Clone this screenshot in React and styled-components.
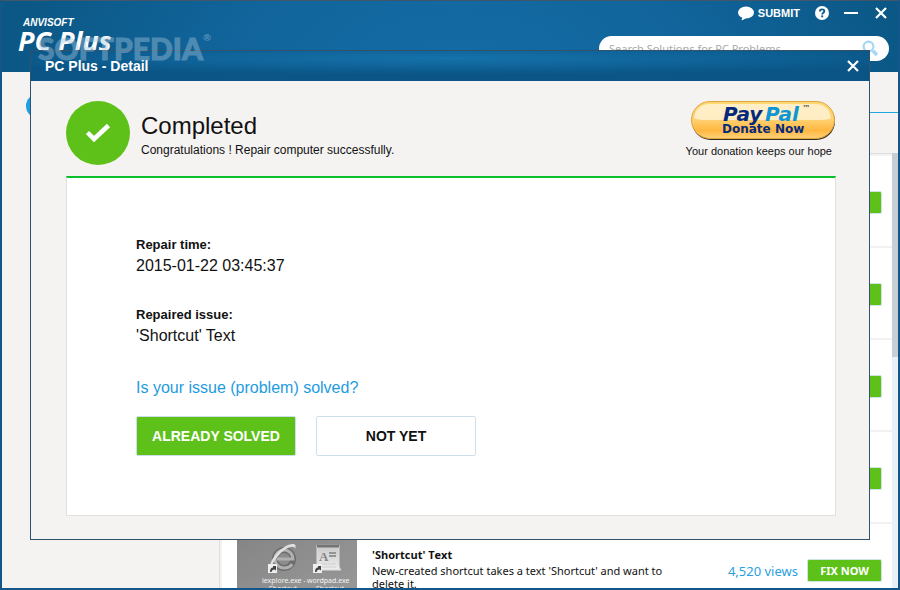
import React from "react";
import styled, { createGlobalStyle } from "styled-components";

const issues = [
  { id: 1 },
  { id: 2 },
  { id: 3 },
  { id: 4 },
  {
    id: 5,
    title: "'Shortcut' Text",
    description: "New-created shortcut takes a text 'Shortcut' and want to delete it.",
    views: "4,520 views",
  },
];

const CloseIcon = () => (
  <svg width="12" height="12" viewBox="0 0 12 12" aria-hidden="true">
    <path d="M1 1l10 10M11 1L1 11" stroke="#fff" strokeWidth="2.200" fill="none" />
  </svg>
);

const BubbleIcon = () => (
  <svg width="16" height="15" viewBox="0 0 16 15" aria-hidden="true">
    <ellipse cx="8" cy="6.500" rx="8" ry="6" fill="#fff" />
    <path d="M3.500 9.500c1 1.500 1 3-.2 4.800 2-.2 4-1.200 5-3z" fill="#fff" />
  </svg>
);

const HelpIcon = () => (
  <svg width="14" height="14" viewBox="0 0 14 14" aria-hidden="true">
    <circle cx="7" cy="7" r="7" fill="#fff" />
    <path
      d="M4.900 5.500c0-1.500 1-2.100 2.200-2.100s2.200.7 2.200 1.900c0 1.600-2.100 1.500-2.100 3.200"
      stroke="#0f5c90"
      strokeWidth="1.900"
      fill="none"
    />
    <rect x="6.200" y="9.400" width="2" height="1.900" fill="#0f5c90" />
  </svg>
);

const SearchIcon = () => (
  <svg width="17" height="17" viewBox="0 0 17 17" aria-hidden="true">
    <circle cx="6.500" cy="6.500" r="4.900" stroke="#a5d8f5" strokeWidth="2.200" fill="none" />
    <path d="M10 10l2 2" stroke="#a5d8f5" strokeWidth="2" />
    <path d="M11.300 11.300l3.700 3.700" stroke="#a5d8f5" strokeWidth="3.600" />
  </svg>
);

const PayPalBadge = () => (
  <svg width="145" height="40" viewBox="0 0 145 40" aria-hidden="true">
    <defs>
      <linearGradient id="gold" x1="0" y1="0" x2="0" y2="1">
        <stop offset="0" stopColor="#ffd873" />
        <stop offset="0.500" stopColor="#ffcf70" />
        <stop offset="0.780" stopColor="#ffb740" />
        <stop offset="1" stopColor="#ffd27a" />
      </linearGradient>
      <linearGradient id="shine" x1="0" y1="0" x2="0" y2="1">
        <stop offset="0" stopColor="#fff" stopOpacity="0.600" />
        <stop offset="1" stopColor="#fff6dc" stopOpacity="0.750" />
      </linearGradient>
    </defs>
    <rect x="1" y="2" width="143" height="37" rx="18.500" fill="#38301f" />
    <rect x="0.500" y="0.500" width="143" height="37" rx="18.500" fill="url(#gold)" stroke="#dfa640" />
    <path d="M3 17.500C4 8 10 3 19 3h105c9 0 15 5 16 14.500-4 1.500-8 1.500-14 1.500H17c-6 0-10 0-14-1.500z" fill="url(#shine)" />
    <g fontFamily="DejaVu Sans" fontWeight="bold">
      <text x="32" y="20" fontSize="20" fontStyle="italic" fill="#042a7b">Pay</text>
      <text x="74" y="20" fontSize="20" fontStyle="italic" fill="#0f95d4">Pal</text>
      <text x="111" y="10" fontSize="8" fill="#555">™</text>
      <text x="31" y="32" fontSize="12" fill="#042a7b">Donate Now</text>
    </g>
  </svg>
);

const ShortcutArrow = ({ x, y }) => (
  <g transform={`translate(${x} ${y})`}>
    <rect width="9" height="9" fill="#eee" />
    <path d="M2 8c0-3 1-4.500 3-4.500V2h3v4.500L6.500 5.500C4.500 5.500 4 6.500 3.500 8z" fill="#444" />
  </g>
);

const Thumbnail = () => (
  <svg width="120" height="68" viewBox="0 0 120 68" aria-hidden="true">
    <defs>
      <linearGradient id="desk" x1="0" y1="0" x2="1" y2="1">
        <stop offset="0" stopColor="#858585" />
        <stop offset="1" stopColor="#9a9a9a" />
      </linearGradient>
      <linearGradient id="paper" x1="0" y1="0" x2="0" y2="1">
        <stop offset="0" stopColor="#c8c8c8" />
        <stop offset="1" stopColor="#eee" />
      </linearGradient>
    </defs>
    <rect width="120" height="68" fill="url(#desk)" />
    <circle cx="47" cy="22" r="9" fill="none" stroke="#6c6c6c" strokeWidth="6" />
    <path d="M40 22h16c0-5-4-9-9-9s-9 4-9 9 4 9 9 9c4 0 7-2 8-4" fill="none" stroke="#b0b0b0" strokeWidth="3" />
    <path d="M34 31c-3-5 6-18 17-23 6-2 9-1 7 4 0-3-4-3-9 0-8 5-13 13-15 19z" fill="#e0e0e0" />
    <path d="M80 8h22v20c0 2 1 4 2 5H83c-2-1-3-3-3-5z" fill="url(#paper)" stroke="#ddd" />
    <path d="M80 9h22" stroke="#747474" strokeWidth="3" />
    <text x="82" y="24" fontFamily="Liberation Serif" fontSize="13" fontWeight="bold" fill="#858585">A</text>
    <path d="M92 16h7M92 19h7" stroke="#949494" strokeWidth="2" />
    <path d="M84 27h15M84 30h15" stroke="#d0d0d0" />
    <ShortcutArrow x={31} y={27} />
    <ShortcutArrow x={76} y={27} />
    <g fontFamily="Noto Sans" fontSize="7" fill="#f4f4f4">
      <text x="25" y="46">iexplore.exe -</text>
      <text x="70" y="46">wordpad.exe</text>
      <text x="32" y="54">Shortcut</text>
      <text x="79" y="54">Shortcut</text>
    </g>
  </svg>
);

const App = () => {
  return (
    <Janela>
      <GlobalStyle />
      <Topo>
        <Marca>
          <MarcaEmpresa>ANVISOFT</MarcaEmpresa>
          <MarcaProduto>PC Plus</MarcaProduto>
        </Marca>
        <TopoDireita>
          <Acoes>
            <BotaoTopo>
              <BubbleIcon />
              SUBMIT
            </BotaoTopo>
            <BotaoTopo aria-label="Help">
              <HelpIcon />
            </BotaoTopo>
            <BotaoTopo aria-label="Minimize">
              <Traco />
            </BotaoTopo>
            <BotaoTopo aria-label="Close">
              <CloseIcon />
            </BotaoTopo>
          </Acoes>
          <Busca>
            <BuscaInput
              type="text"
              aria-label="Search"
              placeholder="Search Solutions for PC Problems"
            />
            <BotaoBusca aria-label="Search">
              <SearchIcon />
            </BotaoBusca>
          </Busca>
        </TopoDireita>
      </Topo>

      <Etapas>
        <EtapaPonto />
        <EtapaLinha />
      </Etapas>

      <Corpo>
        <Lateral />
        <Lista>
          {issues.map((issue) => (
            <Linha key={issue.id}>
              {issue.title && (
                <>
                  <Thumbnail />
                  <LinhaTexto>
                    <LinhaTitulo>{issue.title}</LinhaTitulo>
                    <LinhaDescricao>{issue.description}</LinhaDescricao>
                  </LinhaTexto>
                  <Visitas>{issue.views}</Visitas>
                </>
              )}
              <BotaoCorrigir aria-label="Fix now">{issue.title && "FIX NOW"}</BotaoCorrigir>
            </Linha>
          ))}
        </Lista>
        <Rolagem>
          <RolagemBarra />
        </Rolagem>
      </Corpo>

      <Dialogo role="dialog" aria-labelledby="dialog-title">
        <DialogoTopo>
          <DialogoTitulo id="dialog-title">PC Plus - Detail</DialogoTitulo>
          <BotaoTopo aria-label="Close dialog">
            <CloseIcon />
          </BotaoTopo>
        </DialogoTopo>
        <DialogoCorpo>
          <Resumo>
            <Selo>
              <svg width="26" height="22" viewBox="0 0 26 22" aria-hidden="true">
                <path d="M2.500 10.500l6.500 6.500L23.500 3.500" stroke="#fff" strokeWidth="4.500" fill="none" />
              </svg>
            </Selo>
            <ResumoTexto>
              <ResumoTitulo>Completed</ResumoTitulo>
              <ResumoDetalhe>Congratulations ! Repair computer successfully.</ResumoDetalhe>
            </ResumoTexto>
            <Doacao>
              <BotaoDoacao aria-label="PayPal Donate Now">
                <PayPalBadge />
              </BotaoDoacao>
              <DoacaoTexto>Your donation keeps our hope</DoacaoTexto>
            </Doacao>
          </Resumo>
          <Painel>
            <Dados>
              <Rotulo>Repair time:</Rotulo>
              <Valor>2015-01-22 03:45:37</Valor>
              <Rotulo>Repaired issue:</Rotulo>
              <Valor>'Shortcut' Text</Valor>
            </Dados>
            <Pergunta>Is your issue (problem) solved?</Pergunta>
            <Respostas>
              <BotaoResposta $primary>ALREADY SOLVED</BotaoResposta>
              <BotaoResposta>NOT YET</BotaoResposta>
            </Respostas>
          </Painel>
        </DialogoCorpo>
      </Dialogo>

      <MarcaDagua>
        SOFTPEDIA<Registrada>®</Registrada>
      </MarcaDagua>
    </Janela>
  );
};

const GlobalStyle = createGlobalStyle`
  * {
    box-sizing: border-box;
  }

  body {
    margin: 0;
    font-family: "Liberation Sans", Arial, sans-serif;
    color: #111;
  }

  button {
    font-family: inherit;
    cursor: pointer;
  }
`;

const Janela = styled.div`
  position: relative;
  display: flex;
  flex-direction: column;
  height: 100vh;
  overflow: hidden;
  border: 2px solid #14558a;
  border-top: 1px solid #42566a;
  background: #f5f3f2;
`;

const Topo = styled.header`
  display: flex;
  justify-content: space-between;
  flex: none;
  height: 71px;
  padding: 0 9px 0 16px;
  background: radial-gradient(ellipse 55% 300% at 51% 80%, #146ca5 0%, #11659c 45%, #0b5886 90%);
`;

const Marca = styled.div`
  padding-top: 15px;
  color: #fff;
  font-style: italic;
  font-weight: bold;
`;

const MarcaEmpresa = styled.div`
  padding-left: 5px;
  font-size: 10px;
  line-height: 13px;
`;

const MarcaProduto = styled.div`
  font-family: "Open Sans", sans-serif;
  font-size: 27px;
  line-height: 24px;
`;

const TopoDireita = styled.div`
  display: flex;
  flex-direction: column;
  gap: 11px;
  width: 290px;
`;

const Acoes = styled.div`
  display: flex;
  align-items: center;
  justify-content: flex-end;
  gap: 15px;
  height: 24px;
  padding-right: 2px;
`;

const BotaoTopo = styled.button`
  display: flex;
  align-items: center;
  gap: 4px;
  padding: 0;
  border: none;
  background: transparent;
  color: #fff;
  font-size: 11px;
  font-weight: bold;
`;

const Traco = styled.span`
  width: 14px;
  height: 2px;
  margin-right: 2px;
  background: #fff;
`;

const Busca = styled.div`
  display: flex;
  align-items: center;
  height: 25px;
  padding: 0 10px;
  border-radius: 13px;
  background: #fff;
`;

const BuscaInput = styled.input`
  flex: 1;
  padding: 0;
  border: none;
  outline: none;
  background: transparent;
  font-family: "Noto Sans", sans-serif;
  font-size: 11px;

  &::placeholder {
    color: #aaa;
  }
`;

const BotaoBusca = styled.button`
  display: flex;
  padding: 0;
  border: none;
  background: transparent;
`;

const Etapas = styled.div`
  display: flex;
  align-items: flex-end;
  flex: none;
  height: 46px;
  padding-left: 24px;
`;

const EtapaPonto = styled.span`
  width: 24px;
  height: 24px;
  border-radius: 50%;
  background: #1e9fe5;
`;

const EtapaLinha = styled.span`
  flex: 1;
  height: 1px;
  margin-bottom: 5px;
  background: #1fa8e0;
`;

const Corpo = styled.div`
  display: flex;
  flex: 1;
  min-height: 0;
  padding-top: 35px;
`;

const Lateral = styled.aside`
  flex: none;
  width: 217px;
`;

const Lista = styled.div`
  flex: 1;
  overflow: hidden;
  padding: 2px 0 0 2px;
  border-top: 1px solid #dedede;
  border-left: 1px solid #dedede;
`;

const Linha = styled.div`
  display: flex;
  align-items: center;
  justify-content: flex-end;
  height: 92px;
  padding: 3px 10px 0 15px;
  border-bottom: 2px solid #f2f2f2;
  background: #fff;
  font-family: "Noto Sans", sans-serif;
`;

const LinhaTexto = styled.div`
  width: 324px;
  margin-right: auto;
  padding: 0 0 6px 15px;
`;

const LinhaTitulo = styled.h3`
  margin: 0;
  font-family: "Open Sans", sans-serif;
  font-size: 11px;
  font-weight: bold;
  line-height: 18px;
`;

const LinhaDescricao = styled.p`
  margin: 0;
  font-size: 11px;
  line-height: 13px;
`;

const Visitas = styled.span`
  margin-right: 9px;
  color: #2b9fe0;
  font-size: 13px;
`;

const BotaoCorrigir = styled.button`
  width: 75px;
  height: 23px;
  padding: 0;
  border: 1px solid #cfe3e3;
  border-radius: 2px;
  background: #5ec11a;
  color: #fff;
  font-size: 11px;
  font-weight: bold;
`;

const Rolagem = styled.div`
  width: 6px;
  background: #e8f1f8;
`;

const RolagemBarra = styled.div`
  height: 47%;
  background: #c6cfd6;
`;

const Dialogo = styled.section`
  position: absolute;
  inset: 49px 28px 48px;
  display: flex;
  flex-direction: column;
  border: 1px solid #31526b;
  background: #f5f3f2;
`;

const DialogoTopo = styled.div`
  display: flex;
  align-items: center;
  justify-content: space-between;
  height: 30px;
  padding: 0 10px 0 14px;
  background: radial-gradient(ellipse 60% 55% at 50% 24%, #1572ab 0%, #10659b 45%, #0a5585 100%);
`;

const DialogoTitulo = styled.h2`
  margin: 0;
  color: #fff;
  font-size: 14px;
`;

const DialogoCorpo = styled.div`
  display: flex;
  flex-direction: column;
  flex: 1;
  padding: 20px 33px 23px 35px;
`;

const Resumo = styled.div`
  display: flex;
  gap: 11px;
  padding-bottom: 11px;
`;

const Selo = styled.div`
  display: flex;
  align-items: center;
  justify-content: center;
  width: 64px;
  height: 64px;
  border-radius: 50%;
  background: #5ec11a;
`;

const ResumoTexto = styled.div`
  flex: 1;
  padding-top: 10px;
`;

const ResumoTitulo = styled.h1`
  margin: 0;
  font-size: 24px;
  font-weight: normal;
  line-height: 30px;
`;

const ResumoDetalhe = styled.p`
  margin: 0;
  font-size: 12px;
  line-height: 18px;
`;

const Doacao = styled.div`
  display: flex;
  flex-direction: column;
  align-items: flex-end;
`;

const BotaoDoacao = styled.button`
  display: flex;
  padding: 0;
  border: none;
  background: transparent;
`;

const DoacaoTexto = styled.p`
  margin: 0;
  padding: 2px 4px 0 0;
  font-size: 11px;
  line-height: 16px;
`;

const Painel = styled.div`
  flex: 1;
  padding: 57px 69px 0;
  border: 1px solid #e0e0e0;
  border-top: 2px solid #08c02b;
  background: #fff;
`;

const Dados = styled.dl`
  margin: 0;
`;

const Rotulo = styled.dt`
  font-size: 13px;
  font-weight: bold;
  line-height: 20px;
`;

const Valor = styled.dd`
  margin: 0 0 28px;
  font-size: 16px;
  line-height: 22px;
`;

const Pergunta = styled.p`
  margin: 0 0 15px;
  color: #1e9be0;
  font-size: 16px;
  line-height: 26px;
`;

const Respostas = styled.div`
  display: flex;
  gap: 20px;
`;

const BotaoResposta = styled.button`
  width: 160px;
  height: 40px;
  padding: 0;
  border: 1px solid #cddfea;
  border-radius: 2px;
  background: ${({ $primary }) => ($primary ? "#5ec11a" : "#fff")};
  color: ${({ $primary }) => ($primary ? "#fff" : "#111")};
  font-size: 14px;
  font-weight: bold;
`;

const MarcaDagua = styled.div`
  position: absolute;
  top: 28px;
  left: 36px;
  display: flex;
  color: #a3c4dc;
  opacity: 0.42;
  font-family: Lato, sans-serif;
  font-size: 30px;
  font-weight: 900;
  line-height: 38px;
  -webkit-text-stroke: 1px #a3c4dc;
  pointer-events: none;
`;

const Registrada = styled.span`
  font-size: 10px;
  line-height: 16px;
  -webkit-text-stroke: 0;
`;

export default App;
